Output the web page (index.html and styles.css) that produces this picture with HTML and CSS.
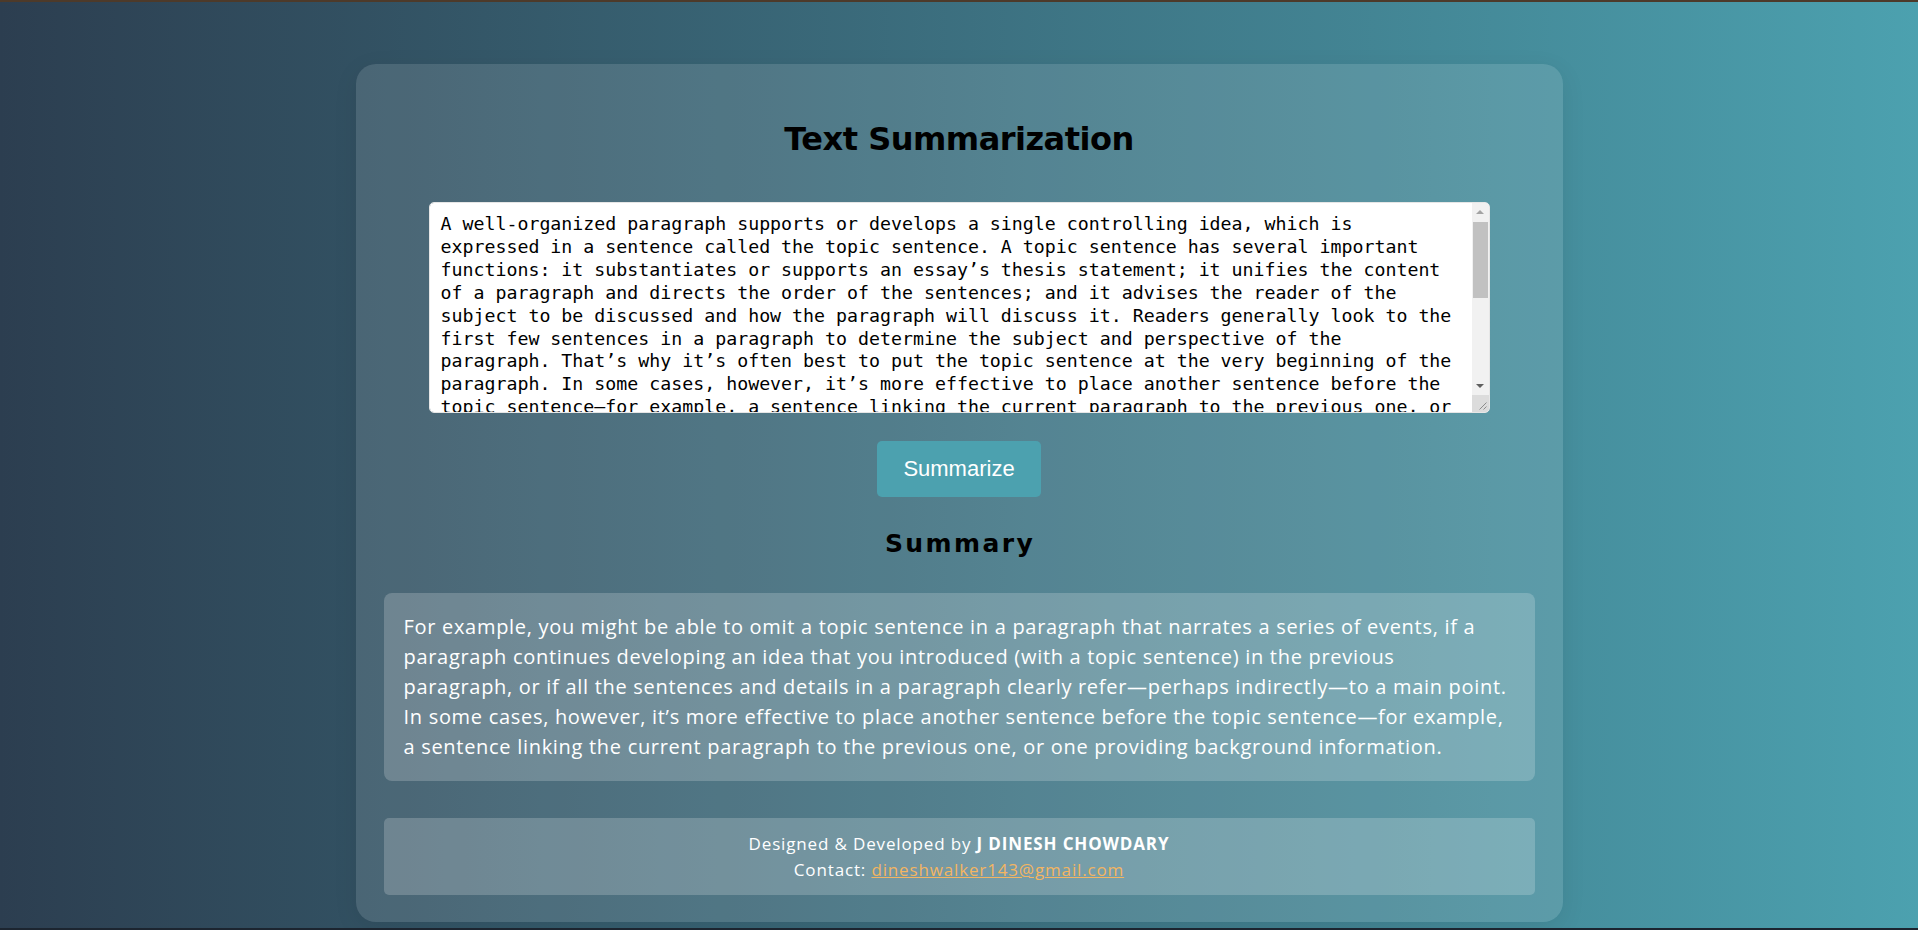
FILE: index.html
```html
<!DOCTYPE html>
<html lang="en">
<head>
<meta charset="utf-8">
<title>Text Summarization</title>
<link rel="stylesheet" href="styles.css">
</head>
<body>
<div class="container">
  <h1 class="title">Text Summarization</h1>
  <form class="form">
    <div class="field">
      <textarea class="input" name="text">A well-organized paragraph supports or develops a single controlling idea, which is expressed in a sentence called the topic sentence. A topic sentence has several important functions: it substantiates or supports an essay’s thesis statement; it unifies the content of a paragraph and directs the order of the sentences; and it advises the reader of the subject to be discussed and how the paragraph will discuss it. Readers generally look to the first few sentences in a paragraph to determine the subject and perspective of the paragraph. That’s why it’s often best to put the topic sentence at the very beginning of the paragraph. In some cases, however, it’s more effective to place another sentence before the topic sentence—for example, a sentence linking the current paragraph to the previous one, or one providing background information. Although most paragraphs should have a topic sentence, there are a few situations when a paragraph might not need a topic sentence. For example, you might be able to omit a topic sentence in a paragraph that narrates a series of events, if a paragraph continues developing an idea that you introduced (with a topic sentence) in the previous paragraph, or if all the sentences and details in a paragraph clearly refer—perhaps indirectly—to a main point.</textarea>
      <div class="scrollbar" aria-hidden="true">
        <span class="sb-btn"><svg width="8" height="5" viewBox="0 0 8 5"><path d="M0 5 L4 1 L8 5 Z" fill="#a3a3a3"/></svg></span>
        <span class="sb-track"><span class="sb-thumb"></span></span>
        <span class="sb-btn"><svg width="8" height="5" viewBox="0 0 8 5"><path d="M0 0 L4 4 L8 0 Z" fill="#5f5f5f"/></svg></span>
        <span class="sb-corner"><svg width="17" height="17" viewBox="0 0 17 17"><path d="M14.5 7.5 L7.5 14.5 M14.5 11.5 L11.5 14.5" stroke="#8c8c8c" stroke-width="1" fill="none"/></svg></span>
      </div>
    </div>
    <button class="btn" type="button">Summarize</button>
  </form>
  <h2 class="subtitle">Summary</h2>
  <div class="summary">
    <p>For example, you might be able to omit a topic sentence in a paragraph that narrates a series of events, if a<br>
    paragraph continues developing an idea that you introduced (with a topic sentence) in the previous<br>
    paragraph, or if all the sentences and details in a paragraph clearly refer—perhaps indirectly—to a main point.<br>
    In some cases, however, it’s more effective to place another sentence before the topic sentence—for example,<br>
    a sentence linking the current paragraph to the previous one, or one providing background information.</p>
  </div>
  <footer class="footer">
    <p>Designed &amp; Developed by <strong>J DINESH CHOWDARY</strong></p>
    <p>Contact: <a class="mail" href="mailto:dineshwalker143@gmail.com">dineshwalker143@gmail.com</a></p>
  </footer>
</div>
</body>
</html>
```

FILE: styles.css
```css
html {
  background: #1f2a36;
}
body {
  margin: 0;
  box-sizing: border-box;
  height: 930px;
  border-top: 2px solid #4d3a2a;
  border-bottom: 2px solid #1c2530;
  background: linear-gradient(to right, #2c3e50, #4ca1af);
  font-family: "Open Sans", "Noto Sans", sans-serif;
  overflow: hidden;
}
.container {
  width: 1207px;
  box-sizing: border-box;
  margin: 62px auto 0;
  padding: 55px 28px 27px;
  background: rgba(255, 255, 255, 0.12);
  border-radius: 20px;
  box-shadow: 0 6px 24px rgba(0, 0, 0, 0.08);
  display: flex;
  flex-direction: column;
  align-items: center;
}
.title {
  margin: 0;
  font-family: "DejaVu Sans", sans-serif;
  font-weight: 700;
  font-size: 32px;
  line-height: 40px;
  letter-spacing: -0.5px;
  color: #000;
}
.form {
  margin-top: 43px;
  width: 100%;
  display: flex;
  flex-direction: column;
  align-items: center;
}
.field {
  position: relative;
  width: 1061px;
}
.input {
  display: block;
  width: 100%;
  height: 211px;
  box-sizing: border-box;
  border: 1px solid #e6e6e6;
  border-radius: 5px;
  padding: 10px 34px 10px 11px;
  font-family: "DejaVu Sans Mono", monospace;
  font-size: 18.25px;
  line-height: 22.9px;
  color: #000;
  background: #fff;
  resize: vertical;
  outline: none;
}
.scrollbar {
  position: absolute;
  top: 1px;
  right: 1px;
  bottom: 1px;
  width: 17px;
  display: flex;
  flex-direction: column;
  background: #f1f1f1;
  border-radius: 0 4px 4px 0;
  overflow: hidden;
  pointer-events: none;
}
.sb-btn {
  height: 17px;
  flex: none;
  display: flex;
  align-items: center;
  justify-content: center;
}
.sb-track {
  flex: 1;
  padding-top: 2px;
}
.sb-thumb {
  display: block;
  height: 76px;
  margin: 0 1px;
  background: #c1c1c1;
}
.sb-corner {
  height: 17px;
  flex: none;
  display: block;
  background: #dcdcdc;
}
.sb-corner svg {
  display: block;
}
.btn {
  margin-top: 28px;
  padding: 15px 26px;
  border: none;
  border-radius: 5px;
  background: #4ca1af;
  color: #fff;
  font-family: "Liberation Sans", Arial, sans-serif;
  font-size: 22px;
  line-height: 26px;
  cursor: pointer;
}
.subtitle {
  margin: 32px 0 0;
  padding-left: 2px;
  font-family: "DejaVu Sans", sans-serif;
  font-weight: 700;
  font-size: 25px;
  line-height: 30px;
  letter-spacing: 2.4px;
  color: #000;
}
.summary {
  margin-top: 34px;
  align-self: stretch;
  padding: 19px 20px;
  background: rgba(255, 255, 255, 0.2);
  border-radius: 8px;
  color: #fff;
}
.summary p {
  margin: 0;
  font-size: 20px;
  line-height: 30px;
  letter-spacing: 0.7px;
}
.footer {
  margin-top: 37px;
  align-self: stretch;
  padding: 13px 20px 12px;
  background: rgba(255, 255, 255, 0.2);
  border-radius: 5px;
  color: #fff;
  text-align: center;
  font-size: 17px;
  line-height: 26px;
  letter-spacing: 0.85px;
}
.footer p {
  margin: 0;
}
.footer strong {
  font-weight: 700;
}
.mail {
  color: #f3b562;
}
```
